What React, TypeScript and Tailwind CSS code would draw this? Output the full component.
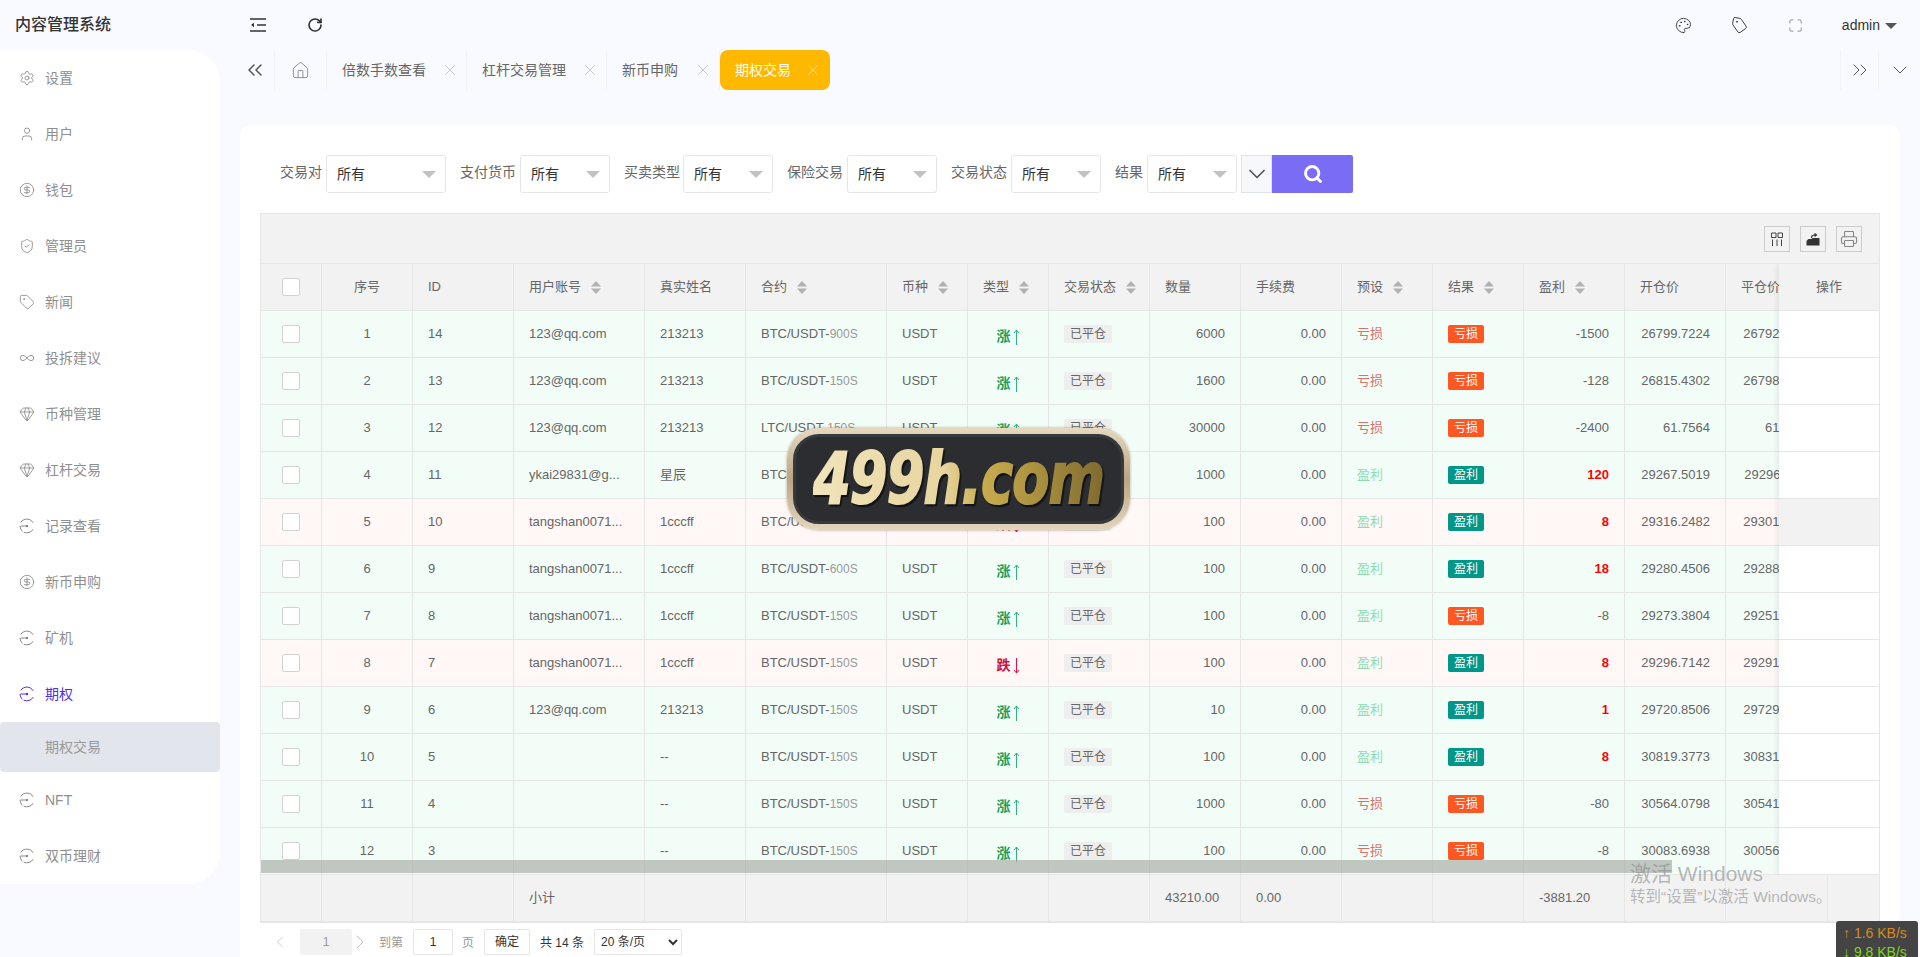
import {
  ChevronDown,
  ChevronLeft,
  ChevronRight,
  ChevronsLeft,
  ChevronsRight,
  CircleDollarSign,
  Gem,
  Home,
  Infinity as InfinityIcon,
  Maximize,
  Palette,
  Printer,
  RotateCw,
  Search,
  Settings,
  ShieldCheck,
  Tag,
  User,
  X,
} from 'lucide-react';
import type { ReactNode } from 'react';

const FONT = "font-['Liberation_Sans','Noto_Sans_CJK_SC',sans-serif]";

function RecordIcon({ className }: { className?: string }) {
  return (
    <svg viewBox="0 0 16 16" fill="none" stroke="currentColor" strokeWidth="1" className={className}>
      <path d="M14 4.5A7 7 0 0 0 2 4M1 8.5a7 7 0 0 0 2 4.500M5 14.300a7 7 0 0 0 9-2.800" strokeLinecap="round" />
      <path d="M1.500 8h7" />
      <circle cx="8" cy="8" r="1.200" fill="currentColor" stroke="none" />
    </svg>
  );
}

const menu = [
  { label: '设置', icon: Settings },
  { label: '用户', icon: User },
  { label: '钱包', icon: CircleDollarSign },
  { label: '管理员', icon: ShieldCheck },
  { label: '新闻', icon: Tag },
  { label: '投拆建议', icon: InfinityIcon },
  { label: '币种管理', icon: Gem },
  { label: '杠杆交易', icon: Gem },
  { label: '记录查看', icon: RecordIcon },
  { label: '新币申购', icon: CircleDollarSign },
  { label: '矿机', icon: RecordIcon },
];

function Sidebar() {
  return (
    <aside className="w-[220px] h-[834px] shrink-0 bg-white rounded-r-[32px] text-[14px] text-[#8f8f8f]">
      {menu.map((m) => (
        <div key={m.label} className="h-14 flex items-center pl-[19px] gap-[10px]">
          <m.icon className="w-4 h-4 text-[#888] shrink-0" strokeWidth={1.25} />
          <span>{m.label}</span>
        </div>
      ))}
      <div className="h-14 flex items-center pl-[19px] gap-[10px] text-[#4f2df5]">
        <RecordIcon className="w-4 h-4 shrink-0" />
        <span>期权</span>
      </div>
      <div className="h-[50px] flex items-center pl-[45px] bg-[#e2e5ec] rounded-sm text-[#999]">期权交易</div>
      <div className="h-14 flex items-center pl-[19px] gap-[10px]">
        <RecordIcon className="w-4 h-4 text-[#888] shrink-0" />
        <span>NFT</span>
      </div>
      <div className="h-14 flex items-center pl-[19px] gap-[10px]">
        <RecordIcon className="w-4 h-4 text-[#888] shrink-0" />
        <span>双币理财</span>
      </div>
    </aside>
  );
}

function Header() {
  return (
    <header className="h-[50px] flex items-center text-[#333]">
      <div className="w-[220px] pl-[15px] text-[16px] font-medium">内容管理系统</div>
      <div className="pl-[30px] flex items-center gap-[41px]">
        <svg viewBox="0 0 16 14" fill="none" stroke="#333" strokeWidth="1.400" className="w-4 h-3.5">
          <path d="M0 1h16M7 7h9M0 13h16" />
          <path d="M4 4.700 1 7l3 2.300z" fill="#333" stroke="none" />
        </svg>
        <RotateCw className="w-4 h-4" strokeWidth={2.5} />
      </div>
      <div className="ml-auto flex items-center pr-[23px]">
        <Palette className="w-[17px] h-[17px] mr-[39px]" strokeWidth={1.25} />
        <Tag className="w-[17px] h-[17px] mr-[40px] rotate-[10deg]" strokeWidth={1.25} />
        <Maximize className="w-[15px] h-[15px] mr-[39px] text-[#777]" strokeWidth={1.25} />
        <span className="text-[14px]">admin</span>
        <span className="ml-[5px] mt-[2px] w-0 h-0 border-x-[6px] border-x-transparent border-t-[6px] border-t-[#555]" />
      </div>
    </header>
  );
}

const tabs = [
  { label: '倍数手数查看', w: 'w-[140px]' },
  { label: '杠杆交易管理', w: 'w-[140px]' },
  { label: '新币申购', w: 'w-[113px]' },
];

function TabBar() {
  return (
    <div className="h-10 flex items-stretch text-[14px] text-[#666]">
      <div className="w-[35px] border-r border-[#f3f3f7] flex items-center pl-[3px]">
        <ChevronsLeft className="w-6 h-6 text-[#555]" strokeWidth={1.5} />
      </div>
      <div className="w-[52px] border-r border-[#f3f3f7] flex items-center justify-center">
        <Home className="w-[19px] h-[19px] text-[#777]" strokeWidth={1} />
      </div>
      {tabs.map((t) => (
        <div key={t.label} className={`${t.w} border-r border-[#f3f3f7] flex items-center pl-[15px]`}>
          <span>{t.label}</span>
          <X className="ml-auto mr-[7px] w-[18px] h-[18px] text-[#bbb]" strokeWidth={1} />
        </div>
      ))}
      <div className="w-[110px] bg-[#ffb800] rounded-lg text-white flex items-center pl-[15px]">
        <span>期权交易</span>
        <X className="ml-auto mr-[8px] w-[18px] h-[18px] text-[#ffe9a8]" strokeWidth={1} />
      </div>
      <div className="ml-auto w-[39px] border-x border-[#f3f3f7] flex items-center justify-center">
        <ChevronsRight className="w-6 h-6 text-[#555]" strokeWidth={1} />
      </div>
      <div className="w-[41px] flex items-center justify-center">
        <ChevronDown className="w-6 h-6 text-[#555]" strokeWidth={1} />
      </div>
    </div>
  );
}

function Field({ label, w, gap }: { label: string; w: string; gap: string }) {
  return (
    <div className={`flex items-center ${gap}`}>
      <span className="text-[#666] text-[14px] -mt-[3px]">{label}</span>
      <div className={`${w} h-[38px] border border-[#e6e6e6] rounded-[3px] flex items-center pl-[10px] pr-[9px] text-[#333]`}>
        <span className="mt-[1px] text-[14px]">所有</span>
        <span className="ml-auto w-0 h-0 border-x-[7px] border-x-transparent border-t-[7px] border-t-[#c2c2c2]" />
      </div>
    </div>
  );
}

function FilterForm() {
  return (
    <div className="h-[38px] flex items-center pl-5">
      <Field label="交易对" w="w-[120px]" gap="gap-1" />
      <div className="ml-[14px]"><Field label="支付货币" w="w-[90px]" gap="gap-1" /></div>
      <div className="ml-[14px]"><Field label="买卖类型" w="w-[90px]" gap="gap-[3px]" /></div>
      <div className="ml-[14px]"><Field label="保险交易" w="w-[90px]" gap="gap-1" /></div>
      <div className="ml-[14px]"><Field label="交易状态" w="w-[90px]" gap="gap-1" /></div>
      <div className="ml-[14px]"><Field label="结果" w="w-[90px]" gap="gap-1" /></div>
      <div className="ml-[4px] w-[31px] h-[38px] border border-[#dfe3ea] bg-[#f7f8fc] flex items-center justify-center">
        <ChevronDown className="w-7 h-7 text-[#555]" strokeWidth={1.5} />
      </div>
      <div className="w-[81px] h-[38px] bg-[#7b6cf6] flex items-center justify-center rounded-r-[2px]">
        <Search className="w-5 h-5 text-white" strokeWidth={3.5} />
      </div>
    </div>
  );
}

function ToolBtn({ children }: { children: ReactNode }) {
  return (
    <div className="w-[26px] h-[26px] border border-[#ccc] flex items-center justify-center text-[#333]">{children}</div>
  );
}

function SortIcon() {
  return (
    <svg viewBox="0 0 10 13" className="w-2.5 h-[13px] ml-[10px] shrink-0" fill="#b2b2b2">
      <path d="M5 0 10 5.500H0zM0 7.500h10L5 13z" />
    </svg>
  );
}

function TypeMark({ up }: { up: boolean }) {
  return (
    <span className={`inline-flex items-center gap-[2px] mt-[5px] text-[14px] font-bold ${up ? 'text-[#18a058]' : 'text-[#d0103a]'}`}>
      {up ? '涨' : '跌'}
      <svg viewBox="0 0 7 16" fill="none" strokeWidth="1" className={`w-[7px] h-4 ${up ? 'stroke-[#2fb380]' : 'stroke-[#e0104a]'}`}>
        {up ? <path d="M3.500 16V1M1 4l2.500-3L6 4" /> : <path d="M3.500 0v15M1 12l2.500 3L6 12" />}
      </svg>
    </span>
  );
}

type Row = {
  id: number;
  user: string;
  name: string;
  pair: string;
  period: string;
  up: boolean;
  qty: string;
  preset: string;
  result: string;
  profit: string;
  open: string;
  close: string;
};

const rows: Row[] = [
  { id: 14, user: '123@qq.com', name: '213213', pair: 'BTC/USDT-', period: '900S', up: true, qty: '6000', preset: '亏损', result: '亏损', profit: '-1500', open: '26799.7224', close: '26792.1520' },
  { id: 13, user: '123@qq.com', name: '213213', pair: 'BTC/USDT-', period: '150S', up: true, qty: '1600', preset: '亏损', result: '亏损', profit: '-128', open: '26815.4302', close: '26798.3104' },
  { id: 12, user: '123@qq.com', name: '213213', pair: 'LTC/USDT-', period: '150S', up: true, qty: '30000', preset: '亏损', result: '亏损', profit: '-2400', open: '61.7564', close: '61.6821' },
  { id: 11, user: 'ykai29831@g...', name: '星辰', pair: 'BTC/USDT-', period: '150S', up: true, qty: '1000', preset: '盈利', result: '盈利', profit: '120', open: '29267.5019', close: '29296.1150' },
  { id: 10, user: 'tangshan0071...', name: '1cccff', pair: 'BTC/USDT-', period: '150S', up: false, qty: '100', preset: '盈利', result: '盈利', profit: '8', open: '29316.2482', close: '29301.4470' },
  { id: 9, user: 'tangshan0071...', name: '1cccff', pair: 'BTC/USDT-', period: '600S', up: true, qty: '100', preset: '盈利', result: '盈利', profit: '18', open: '29280.4506', close: '29288.2310' },
  { id: 8, user: 'tangshan0071...', name: '1cccff', pair: 'BTC/USDT-', period: '150S', up: true, qty: '100', preset: '盈利', result: '亏损', profit: '-8', open: '29273.3804', close: '29251.6620' },
  { id: 7, user: 'tangshan0071...', name: '1cccff', pair: 'BTC/USDT-', period: '150S', up: false, qty: '100', preset: '盈利', result: '盈利', profit: '8', open: '29296.7142', close: '29291.0840' },
  { id: 6, user: '123@qq.com', name: '213213', pair: 'BTC/USDT-', period: '150S', up: true, qty: '10', preset: '盈利', result: '盈利', profit: '1', open: '29720.8506', close: '29729.3300' },
  { id: 5, user: '', name: '--', pair: 'BTC/USDT-', period: '150S', up: true, qty: '100', preset: '盈利', result: '盈利', profit: '8', open: '30819.3773', close: '30831.2010' },
  { id: 4, user: '', name: '--', pair: 'BTC/USDT-', period: '150S', up: true, qty: '1000', preset: '亏损', result: '亏损', profit: '-80', open: '30564.0798', close: '30541.9020' },
  { id: 3, user: '', name: '--', pair: 'BTC/USDT-', period: '150S', up: true, qty: '100', preset: '亏损', result: '亏损', profit: '-8', open: '30083.6938', close: '30056.7710' },
];

const TH = 'h-[47px] border-r border-b border-[#e6e6e6] px-[15px] font-normal text-left bg-[#f2f2f2] text-[#666] whitespace-nowrap';
const TD = 'h-[47px] border-r border-b border-[#e6e6e6] px-[15px] whitespace-nowrap overflow-hidden';

function Cols({ extra }: { extra?: boolean }) {
  return (
    <colgroup>
      <col className="w-[61px]" />
      <col className="w-[91px]" />
      <col className="w-[101px]" />
      <col className="w-[131px]" />
      <col className="w-[101px]" />
      <col className="w-[141px]" />
      <col className="w-[81px]" />
      <col className="w-[81px]" />
      <col className="w-[101px]" />
      <col className="w-[91px]" />
      <col className="w-[101px]" />
      <col className="w-[91px]" />
      <col className="w-[91px]" />
      <col className="w-[101px]" />
      <col className="w-[101px]" />
      <col className="w-[102px]" />
      {extra && <col className="w-[51px]" />}
    </colgroup>
  );
}

function Check() {
  return <div className="w-[18px] h-[18px] mx-auto border border-[#d2d2d2] bg-white rounded-[2px]" />;
}

function SortHead({ label }: { label: string }) {
  return (
    <div className="flex items-center">
      <span>{label}</span>
      <SortIcon />
    </div>
  );
}

function DataTable() {
  return (
    <div className="border border-[#e6e6e6] text-[13px] text-[#666]">
      <div className="h-[50px] bg-[#f2f2f2] border-b border-[#e6e6e6] flex items-center justify-end gap-2.5 pr-[17px]">
        <ToolBtn>
          <svg viewBox="0 0 14 14" fill="none" stroke="#444" strokeWidth="1" className="w-3.5 h-3.5">
            <path d="M1.500 1h4.500v4.500H1.500zM8 1h4.500v4.500H8zM2.500 7.500V14M7 7.500V14M11.500 7.500V14" />
          </svg>
        </ToolBtn>
        <ToolBtn>
          <svg viewBox="0 0 14 14" className="w-3.5 h-3.5">
            <path d="M0.500 9 2.500 7h3l1-1h7v7.500H0.500z" fill="#333" />
            <path d="M5.500 6C5.500 4 6.500 3 9 3" fill="none" stroke="#333" strokeWidth="1.200" />
            <path d="M8.500 0.800 11.500 3 8.500 5.200z" fill="#333" />
          </svg>
        </ToolBtn>
        <ToolBtn>
          <Printer className="w-[18px] h-[18px] text-[#888]" strokeWidth={1.5} />
        </ToolBtn>
      </div>
      <div className="flex h-[611px] overflow-hidden">
        <div className="w-[1518px] overflow-hidden shrink-0">
          <table className="table-fixed w-[1567px] border-separate border-spacing-0">
            <Cols />
            <thead>
              <tr>
                <th className={TH}><Check /></th>
                <th className={`${TH} !text-center`}>序号</th>
                <th className={TH}>ID</th>
                <th className={TH}><SortHead label="用户账号" /></th>
                <th className={TH}>真实姓名</th>
                <th className={TH}><SortHead label="合约" /></th>
                <th className={TH}><SortHead label="币种" /></th>
                <th className={TH}><SortHead label="类型" /></th>
                <th className={TH}><SortHead label="交易状态" /></th>
                <th className={TH}>数量</th>
                <th className={TH}>手续费</th>
                <th className={TH}><SortHead label="预设" /></th>
                <th className={TH}><SortHead label="结果" /></th>
                <th className={TH}><SortHead label="盈利" /></th>
                <th className={TH}>开仓价</th>
                <th className={TH}>平仓价</th>
              </tr>
            </thead>
            <tbody>
              {rows.map((r, i) => (
                <tr key={r.id} className={r.up ? 'bg-[#f3fdf8]' : 'bg-[#fff8f7]'}>
                  <td className={TD}><Check /></td>
                  <td className={`${TD} text-center`}>{i + 1}</td>
                  <td className={TD}>{r.id}</td>
                  <td className={TD}>{r.user}</td>
                  <td className={TD}>{r.name}</td>
                  <td className={TD}>
                    {r.pair}
                    <span className="text-[#999] text-[12px]">{r.period}</span>
                  </td>
                  <td className={TD}>USDT</td>
                  <td className={`${TD} text-center`}>
                    <TypeMark up={r.up} />
                  </td>
                  <td className={TD}>
                    <span className="inline-flex w-12 h-[18px] items-center justify-center bg-[#eeeeee] rounded-[2px] text-[12px]">已平仓</span>
                  </td>
                  <td className={`${TD} text-right`}>{r.qty}</td>
                  <td className={`${TD} text-right`}>0.00</td>
                  <td className={`${TD} ${r.preset === '亏损' ? 'text-[#d9726c]' : 'text-[#8fdcb0]'}`}>{r.preset}</td>
                  <td className={TD}>
                    <span className={`inline-flex w-9 h-[18px] items-center justify-center rounded-[2px] text-[12px] text-white ${r.result === '亏损' ? 'bg-[#ff5722]' : 'bg-[#009688]'}`}>
                      {r.result}
                    </span>
                  </td>
                  <td className={`${TD} text-right ${r.profit.startsWith('-') ? '' : 'font-bold text-[#ff0000]'}`}>{r.profit}</td>
                  <td className={`${TD} text-right`}>{r.open}</td>
                  <td className={`${TD} text-right`}>{r.close}</td>
                </tr>
              ))}
            </tbody>
          </table>
        </div>
        <div className="flex-1 shadow-[-2px_0_6px_rgba(0,0,0,0.08)] z-10">
          <div className="h-[47px] bg-[#f2f2f2] border-b border-[#e6e6e6] flex items-center justify-center">操作</div>
          {rows.map((r, i) => (
            <div key={r.id} className={`h-[47px] border-b border-[#e6e6e6] ${i === 4 ? 'bg-[#f2f2f2]' : 'bg-white'}`} />
          ))}
        </div>
      </div>
      <table className="table-fixed w-full border-separate border-spacing-0 bg-[#f2f2f2]">
        <Cols extra />
        <tbody>
          <tr>
            <td className={TD} />
            <td className={TD} />
            <td className={TD} />
            <td className={TD}>小计</td>
            <td className={TD} />
            <td className={TD} />
            <td className={TD} />
            <td className={TD} />
            <td className={TD} />
            <td className={TD}>43210.00</td>
            <td className={TD}>0.00</td>
            <td className={TD} />
            <td className={TD} />
            <td className={TD}>-3881.20</td>
            <td className={TD} />
            <td className={TD} />
            <td className="h-[47px] border-b border-[#e6e6e6]" />
          </tr>
        </tbody>
      </table>
    </div>
  );
}

function Pagination() {
  return (
    <div className="h-[35px] pt-[6px] flex items-start pl-[10px] text-[12px] text-[#666]">
      <div className="w-5 h-[26px] flex items-center justify-center">
        <ChevronLeft className="w-6 h-6 text-[#c2c2c2]" strokeWidth={1} />
      </div>
      <div className="ml-[10px] w-[52px] h-[26px] bg-[#f2f2f2] rounded-[2px] text-[#999] flex items-center justify-center">1</div>
      <div className="w-4 h-[26px] flex items-center justify-center">
        <ChevronRight className="w-6 h-6 shrink-0 text-[#c2c2c2]" strokeWidth={1} />
      </div>
      <span className="ml-[11px] mt-[5px] text-[#999]">到第</span>
      <div className="ml-[10px] w-10 h-[26px] border border-[#e6e6e6] rounded-[2px] text-[#333] flex items-center justify-center">1</div>
      <span className="ml-[9px] mt-[5px] text-[#999]">页</span>
      <div className="ml-[10px] w-[46px] h-[26px] border border-[#e6e6e6] rounded-[2px] text-[#333] flex items-center justify-center">确定</div>
      <span className="ml-[10px] mt-[5px] text-[#333]">共 14 条</span>
      <select className="ml-[10px] w-[88px] h-[26px] border border-[#e6e6e6] rounded-[2px] bg-white text-[#333] pl-[2px] text-[12px]" defaultValue="20">
        <option value="20">20 条/页</option>
      </select>
    </div>
  );
}

function Logo() {
  return (
    <div className="absolute left-[787px] top-[428px] w-[343px] h-[102px] z-20 rounded-[32px] p-[6px] bg-[linear-gradient(180deg,#e6d9c0,#b9a582_50%,#e3d6bd)] shadow-[0_0_3px_rgba(120,100,70,0.6)]">
      <div className="w-full h-full rounded-[26px] bg-[#2c2d30] border-[3px] border-[#38393c] flex items-center justify-center overflow-hidden">
        <span className="inline-block scale-x-[0.82] scale-y-[1.08] origin-center font-['DejaVu_Sans'] font-bold italic text-[66px] leading-none tracking-[-1px] whitespace-nowrap bg-[linear-gradient(90deg,#f1e4bb_0%,#e8d59f_45%,#c9ad50_58%,#ad9440_75%,#7f6a30_100%)] bg-clip-text text-transparent [-webkit-text-stroke:2px_transparent] drop-shadow-[2px_2px_0_rgba(0,0,0,0.6)]">
          499h.com
        </span>
      </div>
    </div>
  );
}

export default function App() {
  return (
    <div className={`relative w-[1920px] h-[957px] overflow-hidden bg-[#f9faff] ${FONT}`}>
      <Header />
      <div className="flex">
        <Sidebar />
        <main className="w-[1700px] pl-5">
          <TabBar />
          <div className="mt-[35px] w-[1660px] h-[832px] bg-white rounded-t-[10px] px-5 pt-[30px]">
            <FilterForm />
            <div className="mt-5">
              <DataTable />
              <Pagination />
            </div>
          </div>
        </main>
      </div>
      <Logo />
      {/* horizontal scrollbar thumb */}
      <div className="absolute left-[261px] top-[860px] w-[1411px] h-[13px] bg-[#a9afa9]/70" />
      {/* windows activation notice */}
      <div className="absolute left-[1630px] top-[862px] text-[#8a8a8a]/60 pointer-events-none whitespace-nowrap">
        <div className="text-[21px] leading-[24px]">激活 Windows</div>
        <div className="text-[15.5px] leading-[20px] mt-[1px]">转到“设置”以激活 Windows。</div>
      </div>
      {/* network speed widget */}
      <div className="absolute left-[1836px] top-[921px] w-[82px] h-9 bg-[#444] rounded-t-[3px] pl-[7px] pt-[3px] text-[14px] leading-[19px] overflow-hidden whitespace-nowrap">
        <div className="text-[#d98a1c]">↑ 1.6 KB/s</div>
        <div className="text-[#7fd321]">↓ 9.8 KB/s</div>
      </div>
    </div>
  );
}
